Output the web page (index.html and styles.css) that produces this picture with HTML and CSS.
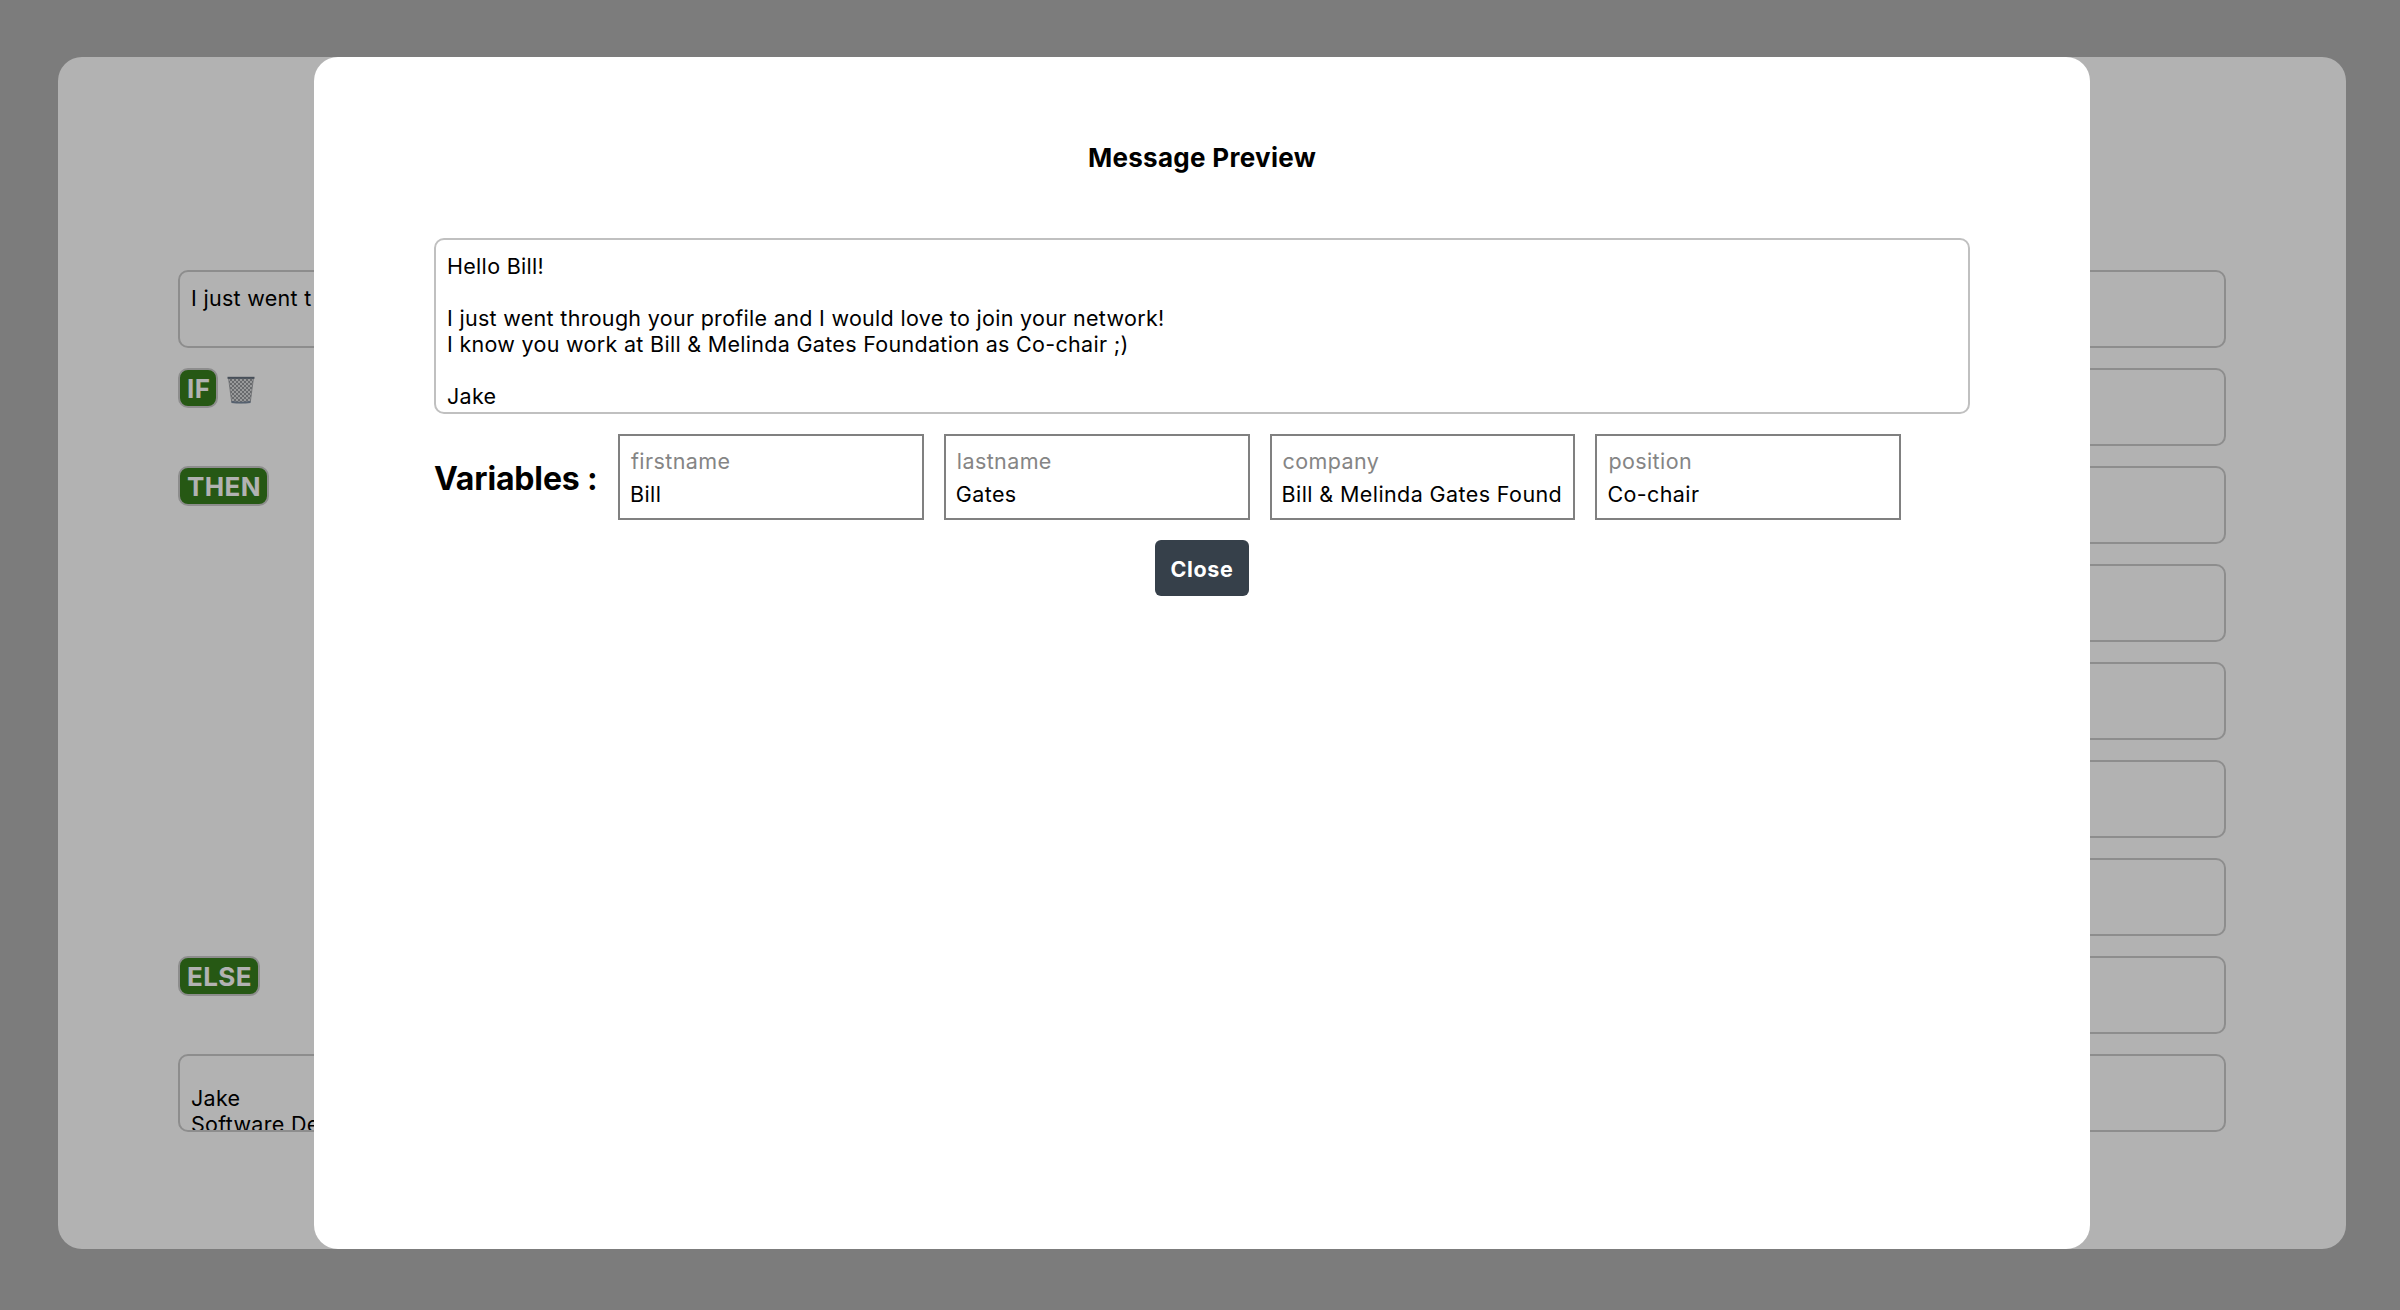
FILE: index.html
```html
<!DOCTYPE html>
<html lang="en">
<head>
<meta charset="utf-8">
<title>Message Preview</title>
<link rel="stylesheet" href="styles.css">
</head>
<body>
<main class="editor">
  <div class="row"><div class="field">I just went t</div></div>
  <div class="row"><div class="label"><span class="tag tag-if">IF</span>
    <svg class="trash" viewBox="0 0 28 28">
      <defs><pattern id="mesh" width="4" height="4" patternUnits="userSpaceOnUse"><path d="M0 0L4 4M4 0L0 4" stroke="#8d9195" stroke-width=".9"/></pattern></defs>
      <path d="M1.500 2h25l-3.200 24q-9.300 1.500-18.600 0z" fill="#dcdddf"/>
      <path d="M1.500 2h25l-3.200 24q-9.300 1.500-18.600 0z" fill="url(#mesh)" stroke="#9a9da1" stroke-width=".8"/>
      <path d="M.5 1.800h27" stroke="#667180" stroke-width="2"/>
      <path d="M4.500 26q9.500 1.300 19 0" fill="none" stroke="#7b8ba0" stroke-width="1.800"/>
    </svg></div><div class="field"></div></div>
  <div class="row"><div class="label"><span class="tag">THEN</span></div><div class="field"></div></div>
  <div class="row"><div class="label"></div><div class="field"></div></div>
  <div class="row"><div class="label"></div><div class="field"></div></div>
  <div class="row"><div class="label"></div><div class="field"></div></div>
  <div class="row"><div class="label"></div><div class="field"></div></div>
  <div class="row"><div class="label"><span class="tag">ELSE</span></div><div class="field"></div></div>
  <div class="row"><div class="field signature">
Jake
Software De</div></div>
</main>
<div class="overlay">
  <section class="modal">
    <h1 class="title">Message Preview</h1>
    <div class="preview">Hello Bill!

I just went through your profile and I would love to join your network!
I know you work at Bill &amp; Melinda Gates Foundation as Co-chair ;)

Jake</div>
    <div class="variables">
      <h2 class="heading">Variables :</h2>
      <div class="variable"><span class="name">firstname</span><span class="value">Bill</span></div>
      <div class="variable"><span class="name">lastname</span><span class="value">Gates</span></div>
      <div class="variable"><span class="name">company</span><span class="value">Bill &amp; Melinda Gates Found</span></div>
      <div class="variable"><span class="name">position</span><span class="value">Co-chair</span></div>
    </div>
    <button class="close">Close</button>
  </section>
</div>
</body>
</html>
```
FILE: styles.css
```css
* { box-sizing: border-box; }
body {
  margin: 0;
  padding: 57px 54px 61px 58px;
  height: 1310px;
  overflow: hidden;
  background: #b2b2b2;
  font-family: Inter, "Liberation Sans", sans-serif;
  font-size: 21.500px;
  line-height: 26px;
  letter-spacing: .4px;
  color: #000;
}
.editor {
  height: 1192px;
  padding: 213px 120px 0;
  border-radius: 24px;
  background: #fff;
  display: flex;
  flex-direction: column;
  gap: 20px;
}
.row { display: flex; height: 78px; }
.label { width: 300px; display: flex; align-items: flex-start; gap: 8px; }
.field {
  flex: 1;
  padding: 13px 11px 0;
  border: 2px solid #cbcbcb;
  border-radius: 10px;
  overflow: hidden;
  white-space: pre;
  letter-spacing: .3px;
}
.signature { padding-top: 3px; }
.tag {
  height: 40px;
  padding: 0 6px 0 7px;
  border: 2px solid #cbcbcb;
  border-radius: 10px;
  background: #377f1e;
  color: #fff;
  font-size: 26px;
  font-weight: 650;
  line-height: 37px;
}
.tag-if { width: 40px; }
.trash { width: 28px; height: 28px; margin: 8px 0 0 1px; }
.overlay {
  position: fixed;
  inset: 0;
  padding: 57px 310px 61px 314px;
  background: rgba(0, 0, 0, .3);
}
.modal {
  height: 1192px;
  padding: 85px 120px 0;
  border-radius: 24px;
  background: #fff;
  display: flex;
  flex-direction: column;
}
.title { margin: 0 0 64px; text-align: center; font-size: 26px; line-height: 32px; font-weight: 650; letter-spacing: .3px; }
.preview {
  height: 176px;
  padding: 13px 11px 0;
  border: 2px solid #c0c0c0;
  border-radius: 10px;
  white-space: pre;
  letter-spacing: .3px;
}
.variables { display: flex; align-items: center; height: 86px; margin-top: 20px; gap: 20px; }
.heading { margin: 0; padding-top: 4px; width: 164px; font-size: 32px; font-weight: 700; letter-spacing: -.15px; white-space: nowrap; }
.variable {
  width: 305.800px;
  height: 86px;
  padding: 12px 10px 0;
  border: 2px solid #808080;
  display: flex;
  flex-direction: column;
  gap: 7px;
  white-space: nowrap;
}
.name { padding-left: 1px; color: #858585; }
.close {
  align-self: center;
  width: 94px;
  height: 56px;
  margin-top: 20px;
  padding: 2px 0 0;
  border: 0;
  border-radius: 6px;
  background: #36404a;
  color: #fff;
  font: 650 21.500px Inter, sans-serif;
  letter-spacing: .6px;
}
```
